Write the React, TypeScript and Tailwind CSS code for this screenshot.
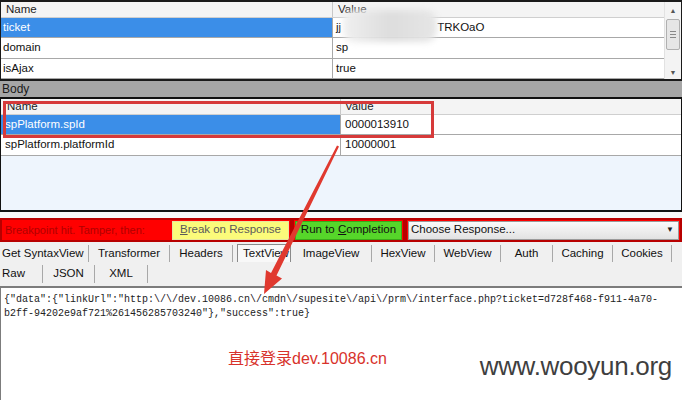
import React from 'react';

const topRows = [
  { name: 'ticket', value: 'jj', tail: 'TRKOaO', selected: true, h: 'h-[20px]' },
  { name: 'domain', value: 'sp', tail: '', selected: false, h: 'h-[21px]' },
  { name: 'isAjax', value: 'true', tail: '', selected: false, h: 'h-[20px]' },
];

const bodyRows = [
  { name: 'spPlatform.spId', value: '0000013910', selected: true, h: 'h-[20px]' },
  { name: 'spPlatform.platformId', value: '10000001', selected: false, h: 'h-[21px]' },
];

const tabs = [
  { label: 'Get SyntaxView', w: 'w-[89px] justify-start pl-[2px]' },
  { label: 'Transformer', w: 'w-[81px] justify-center' },
  { label: 'Headers', w: 'w-[63px] justify-center' },
  { label: 'TextView', w: 'w-[54px] ml-[4px] justify-center', active: true },
  { label: 'ImageView', w: 'w-[81px] justify-center' },
  { label: 'HexView', w: 'w-[63px] justify-center' },
  { label: 'WebView', w: 'w-[66px] justify-center' },
  { label: 'Auth', w: 'w-[52px] justify-center' },
  { label: 'Caching', w: 'w-[60px] justify-center' },
  { label: 'Cookies', w: 'w-[59px] justify-center' },
];

const subTabs = [
  { label: 'Raw', w: 'w-[43px] justify-start pl-[2px]' },
  { label: 'JSON', w: 'w-[52px] justify-center' },
  { label: 'XML', w: 'w-[53px] justify-center' },
];

const line1 = '{"data":{"linkUrl":"http:\\/\\/dev.10086.cn\\/cmdn\\/supesite\\/api\\/prm\\/interface.php?ticket=d728f468-f911-4a70-';
const line2 = 'b2ff-94202e9af721%261456285703240"},"success":true}';

const App: React.FC = () => {
  return (
    <div className="relative w-[682px] h-[400px] overflow-hidden bg-[#f0f0f0] text-[11.5px] text-[#111] font-['Liberation_Sans',Arial,sans-serif] leading-none">

      {/* query string grid */}
      <div className="flex h-[81px] border-t-2 border-b-2 border-x border-[#1a1a1a] bg-white">
        <div className="flex-1 flex flex-col">
          <div className="flex h-[16px] bg-[#f4f4f4] border-b border-[#cfcfcf] text-[#222]">
            <div className="w-[332px] pl-[5px] flex items-center border-r border-[#c8c8c8]">Name</div>
            <div className="flex-1 pl-[5px] flex items-center">Value</div>
          </div>
          {topRows.map((r) => (
            <div key={r.name} className={`flex ${r.h} border-b border-[#a8a8a8]`}>
              <div className={r.selected ? 'w-[332px] pl-[2px] flex items-center border-r border-[#a8a8a8] bg-[#3b8ee8] text-white' : 'w-[332px] pl-[2px] flex items-center border-r border-[#a8a8a8]'}>
                {r.name}
              </div>
              <div className="flex-1 pl-[3px] flex items-center">
                {r.value}
                {r.tail && <span className="ml-[96px]">{r.tail}</span>}
              </div>
            </div>
          ))}
        </div>
        {/* scrollbar */}
        <div className="w-[17px] flex flex-col items-center border-l border-[#e2e2e2] bg-[#f3f3f3]">
          <div className="h-[16px] flex items-center justify-center text-[7px] text-[#555]">▲</div>
          <div className="w-[14px] h-[31px] mt-[1px] rounded-[2px] border border-[#b0b0b0] bg-[#e6e6e6] flex flex-col items-center justify-center gap-[2px]">
            <div className="w-[6px] h-px bg-[#888]"></div>
            <div className="w-[6px] h-px bg-[#888]"></div>
            <div className="w-[6px] h-px bg-[#888]"></div>
          </div>
          <div className="flex-1"></div>
          <div className="h-[14px] flex items-center justify-center text-[7px] text-[#555]">▼</div>
        </div>
      </div>

      {/* Body label band */}
      <div className="h-[16px] bg-[#a6a6a6] pl-[2px] flex items-center text-[12px] text-[#1a1a1a]">Body</div>

      {/* Body grid */}
      <div className="flex flex-col h-[115px] border-t-2 border-b-2 border-x border-[#111] bg-[#eef5fd]">
        <div className="flex h-[16px] bg-[#f4f4f4] border-b border-[#cfcfcf] text-[#222]">
          <div className="w-[340px] pl-[6px] flex items-center border-r border-[#c8c8c8]">Name</div>
          <div className="flex-1 pl-[4px] flex items-center">Value</div>
        </div>
        {bodyRows.map((r) => (
          <div key={r.name} className={`flex ${r.h} border-b border-[#a8a8a8] bg-white`}>
            <div className={r.selected ? 'w-[340px] pl-[4px] flex items-center border-r border-[#a8a8a8] bg-[#3b8ee8] text-white' : 'w-[340px] pl-[4px] flex items-center border-r border-[#a8a8a8]'}>
              {r.name}
            </div>
            <div className="flex-1 pl-[4px] flex items-center">{r.value}</div>
          </div>
        ))}
      </div>

      <div className="h-[6px] bg-[#f7f7f7]"></div>

      {/* breakpoint bar */}
      <div className="flex h-[24px] text-[11px]">
        <div className="w-[292px] flex items-center border-2 border-[#b80000] bg-[#ff0000]">
          <span className="pl-[3px] text-[#b00000]">Breakpoint hit. Tamper, then:</span>
          <div className="ml-auto mr-[1px] w-[117px] h-[19px] flex items-center justify-center bg-[#fbfb7a] border border-[#e6e6a0] text-[#5a5a5a] text-[11.5px]">
            <span><span className="underline">B</span>reak on Response</span>
          </div>
        </div>
        <div className="w-[113px] flex items-center px-[1px] border-2 border-[#b80000] bg-[#ff0000]">
          <div className="w-full h-[19px] flex items-center justify-center bg-[#56d62a] border border-[#3aa81a] text-[#111] text-[11.5px]">
            <span>Run to <span className="underline">C</span>ompletion</span>
          </div>
        </div>
        <div className="flex-1 flex items-center px-[1px] border-2 border-[#b80000] bg-[#ff0000]">
          <div className="w-full h-[19px] flex items-center pl-[2px] pr-[4px] bg-gradient-to-b from-[#fafafa] to-[#e2e2e2] border border-[#9a9a9a] text-[11.5px]">
            <span>Choose Response...</span>
            <span className="ml-auto text-[8px] text-[#222]">▼</span>
          </div>
        </div>
      </div>

      {/* tabs */}
      <div className="flex h-[20px]">
        {tabs.map((t) => (
          <div key={t.label} className={t.active
            ? `${t.w} mt-[2px] flex items-center pl-[4px] border-l border-t border-r border-[#8a8a8a] bg-[#f8f8f8]`
            : `${t.w} mt-[3px] flex items-center border-r border-[#a8a8a8]`}>
            {t.label}
          </div>
        ))}
      </div>
      <div className="flex h-[24px]">
        {subTabs.map((t) => (
          <div key={t.label} className={`${t.w} my-[3px] flex items-center border-r border-[#a8a8a8]`}>
            {t.label}
          </div>
        ))}
      </div>

      {/* text view */}
      <div className="h-[114px] border-t-2 border-l border-[#7c7c7c] bg-white pl-[3px] pt-[5px]">
        <div className="font-['Liberation_Mono',monospace] text-[10px] leading-[14px] text-[#222] whitespace-pre">{line1}</div>
        <div className="font-['Liberation_Mono',monospace] text-[10px] leading-[14px] text-[#222] whitespace-pre">{line2}</div>
        <div className="flex items-end mt-[30px]">
          <div className="ml-[224px] mb-[12px] text-[16px] text-[#d8322b] font-['Liberation_Sans','Noto_Sans_CJK_SC',sans-serif]">直接登录dev.10086.cn</div>
          <div className="ml-auto mr-[10px] text-[26px] text-[#3f3f3f] tracking-[-0.3px]">www.wooyun.org</div>
        </div>
      </div>

      {/* redaction blur over ticket value */}
      <div className="absolute left-[343px] top-[10px] w-[94px] h-[32px] rounded-[12px] blur-[3px] bg-gradient-to-r from-[#f0f0f0] via-[#dddddd] to-[#e6e6e6]"></div>

      {/* annotation box */}
      <div className="absolute left-[3px] top-[101px] w-[431px] h-[37px] border-[3px] border-[#d63a3a]"></div>

      {/* annotation arrow */}
      <svg className="absolute inset-0 pointer-events-none" width="682" height="400" viewBox="0 0 682 400">
        <polygon
          fill="#e0392f"
          points="339,146.5 276.5,275.6 282,278.4 264,294 266,270 271,272.9 337,145.5"
        />
      </svg>
    </div>
  );
};

export default App;
